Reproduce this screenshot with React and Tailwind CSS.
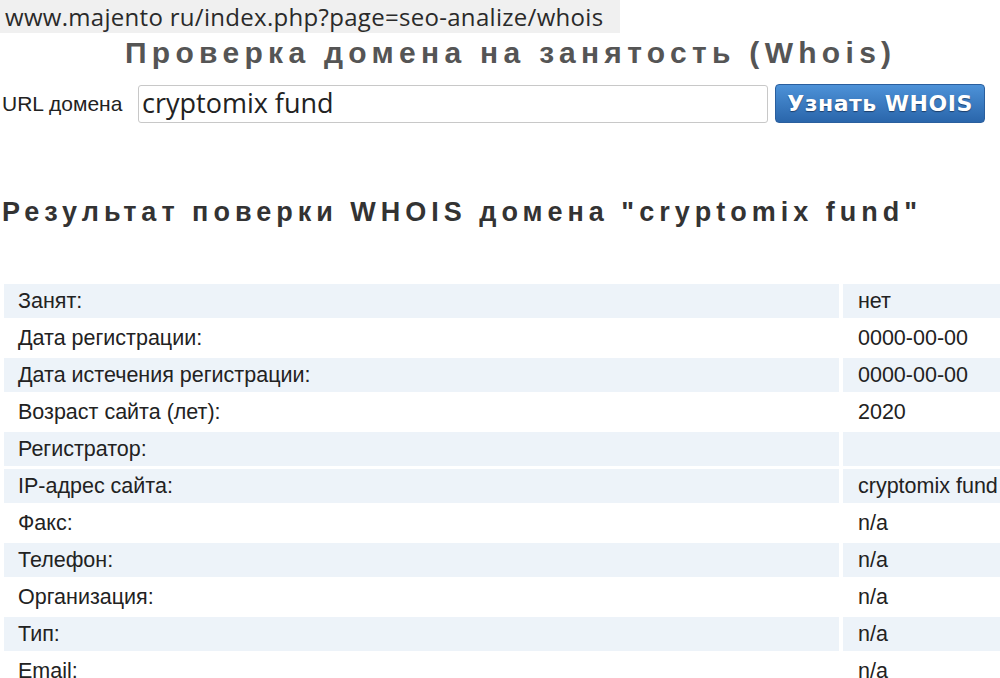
import React from "react";

const rows = [
  ["Занят:", "нет", true],
  ["Дата регистрации:", "0000-00-00", false],
  ["Дата истечения регистрации:", "0000-00-00", true],
  ["Возраст сайта (лет):", "2020", false],
  ["Регистратор:", "", true],
  ["IP-адрес сайта:", "cryptomix fund", true],
  ["Факс:", "n/a", false],
  ["Телефон:", "n/a", true],
  ["Организация:", "n/a", false],
  ["Тип:", "n/a", true],
  ["Email:", "n/a", false],
];

export default function App() {
  return (
    <div className="w-[1000px] h-[678px] overflow-hidden bg-white text-[#222]" style={{ fontFamily: '"Liberation Sans", Arial, sans-serif' }}>
      {/* address bar strip */}
      <div className="w-[620px] h-[33px] bg-[#f0f0f0] pl-[5px] flex items-center">
        <span className="text-[24px] tracking-[0.3px] text-[#2a2a2a] leading-none" style={{ fontFamily: '"Open Sans", sans-serif' }}>
          www.majento ru/index.php?page=seo-analize/whois
        </span>
      </div>

      <h1 className="mt-[4px] ml-[125px] text-[30px] font-bold tracking-[5.3px] text-[#555] leading-[32px] whitespace-nowrap">
        Проверка домена на занятость (Whois)
      </h1>

      <div className="mt-[15px] flex items-center">
        <span className="ml-[2px] w-[136px] text-[21px] text-[#222]">URL домена</span>
        <div className="w-[630px] h-[38px] border border-[#c8c8c8] rounded-[3px] flex items-center pl-[3px] text-[27px] text-[#222]" style={{ fontFamily: '"Open Sans", sans-serif' }}>
          cryptomix fund
        </div>
        <button className="ml-[7px] w-[210px] h-[39px] rounded-[4px] border border-[#2a5f9e] bg-gradient-to-b from-[#4d92d8] to-[#2a66ab] text-white text-[22px] tracking-[0.5px] font-bold [text-shadow:0_1px_1px_#1d3f6b]" style={{ fontFamily: '"DejaVu Sans", Verdana, sans-serif' }}>
          Узнать WHOIS
        </button>
      </div>

      <h2 className="mt-[74px] ml-[2px] text-[27px] font-bold tracking-[5px] text-[#333] leading-[30px] whitespace-nowrap">
        Результат поверки WHOIS домена "cryptomix fund"
      </h2>

      <div className="mt-[57px] ml-[4px] grid grid-cols-[835px_200px] gap-x-[4px] gap-y-[3px]">
        {rows.map(([label, value, shaded], i) => (
          <React.Fragment key={i}>
            <div className={`h-[34px] flex items-center pl-[14px] text-[21.5px] ${shaded ? "bg-[#edf3f9]" : "bg-white"}`}>{label}</div>
            <div className={`h-[34px] flex items-center pl-[15px] text-[21.5px] whitespace-nowrap ${shaded ? "bg-[#edf3f9]" : "bg-white"}`}>{value}</div>
          </React.Fragment>
        ))}
      </div>
    </div>
  );
}
